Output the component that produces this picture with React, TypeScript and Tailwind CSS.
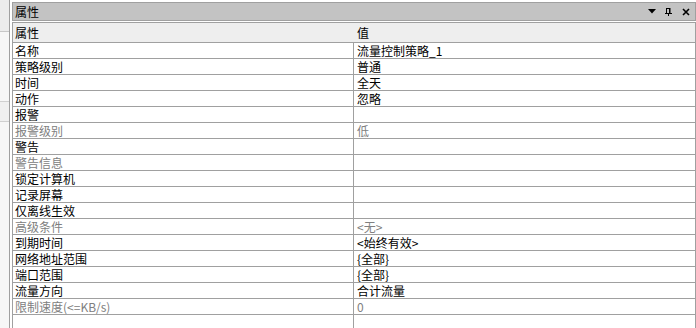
import React from "react";

type Row = { k: string; v?: string; dim?: boolean };

const rows: Row[] = [
  { k: "名称", v: "流量控制策略_1" },
  { k: "策略级别", v: "普通" },
  { k: "时间", v: "全天" },
  { k: "动作", v: "忽略" },
  { k: "报警" },
  { k: "报警级别", v: "低", dim: true },
  { k: "警告" },
  { k: "警告信息", dim: true },
  { k: "锁定计算机" },
  { k: "记录屏幕" },
  { k: "仅离线生效" },
  { k: "高级条件", v: "<无>", dim: true },
  { k: "到期时间", v: "<始终有效>" },
  { k: "网络地址范围", v: "{全部}" },
  { k: "端口范围", v: "{全部}" },
  { k: "流量方向", v: "合计流量" },
  { k: "限制速度(<=KB/s)", v: "0", dim: true },
];

export default function App() {
  return (
    <div
      className="w-[696px] h-[328px] bg-white flex overflow-hidden text-[12px] text-black"
      style={{ fontFamily: '"Noto Sans CJK SC", "Liberation Sans", sans-serif' }}
    >
      {/* left strip */}
      <div className="w-[10px] h-full border-r border-[#a0a0a0] flex flex-col">
        <div className="h-[32px] bg-[#ececec] border-b border-[#c8c8c8]" />
        <div className="h-[70px] bg-[#f7f7f7] border-b border-[#d0d0d0]" />
        <div className="h-[20px] bg-[#f0f0f0] border-b border-[#d0d0d0]" />
        <div className="flex-1 bg-[#f7f7f7]" />
      </div>
      {/* main panel */}
      <div className="ml-[2px] mr-0 flex-1 flex flex-col">
        {/* title bar */}
        <div className="mt-[2px] h-[19px] bg-[#c3c3c3] border border-[#a0a0a0] flex items-center pl-[2px] pr-[5px]">
          <span className="leading-[15px]">属性</span>
          <div className="ml-auto flex items-center">
            <svg width="8" height="5" viewBox="0 0 8 5" className="mr-[9px]">
              <polygon points="0,0 8,0 4,4.5" fill="#000" />
            </svg>
            <svg width="7" height="8" viewBox="0 0 7 8" className="mr-[10px]">
              <rect x="1.5" y="0.5" width="3" height="5" fill="none" stroke="#000" strokeWidth="1" />
              <rect x="4" y="0" width="1.5" height="5.5" fill="#000" />
              <rect x="0" y="5" width="7" height="1" fill="#000" />
              <rect x="3" y="6" width="1" height="2" fill="#000" />
            </svg>
            <svg width="8" height="8" viewBox="0 0 8 8">
              <path d="M1 1 L7 7 M7 1 L1 7" stroke="#000" strokeWidth="1.6" />
            </svg>
          </div>
        </div>
        {/* grid */}
        <div className="mt-[1px] flex-1 border-l border-r border-t border-[#a0a0a0] flex flex-col">
          <div className="h-[20px] bg-[#eeeeee] border-b border-[#a0a0a0] flex items-center">
            <div className="w-[340px] pl-[2px]">属性</div>
            <div className="pl-[4px]">值</div>
          </div>
          {rows.map((r, i) => (
            <div key={i} className="h-[16px] border-b border-[#a0a0a0] flex">
              <div
                className={`w-[340px] pl-[2px] leading-[15px] whitespace-nowrap ${
                  r.dim ? "text-[#808080]" : "text-black"
                }`}
              >
                {r.k}
              </div>
              <div
                className={`flex-1 border-l border-[#a0a0a0] pl-[3px] leading-[15px] whitespace-nowrap ${
                  r.dim ? "text-[#808080]" : "text-black"
                }`}
              >
                {r.v ?? ""}
              </div>
            </div>
          ))}
          <div className="flex-1 flex">
            <div className="w-[340px]" />
            <div className="flex-1 border-l border-[#a0a0a0]" />
          </div>
        </div>
      </div>
    </div>
  );
}
